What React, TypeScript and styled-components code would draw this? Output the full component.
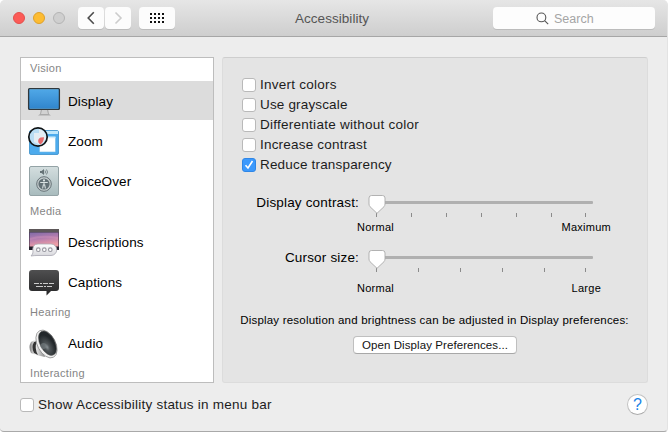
import React from "react";
import styled, { createGlobalStyle } from "styled-components";

const GlobalStyle = createGlobalStyle`
  * { box-sizing: border-box; }
  body { margin: 0; background: #fff; font-family: "Liberation Sans", Arial, sans-serif; }
  button, input { font-family: inherit; }
`;

const Window = styled.main`
  width: 668px;
  height: 432px;
  overflow: hidden;
  background: #ededed;
  border-right: 1px solid #e3e3e3;
  border-bottom: 1px solid #a9a9a9;
  border-radius: 5px 5px 4px 4px;
  color: #1c1c1c;
`;

const Toolbar = styled.header`
  display: flex;
  height: 37px;
  padding: 7px 12px 0 13px;
  background: linear-gradient(#e6e6e6, #cecece);
  border-bottom: 1px solid #a6a6a6;
`;

const Lights = styled.div`
  display: flex;
  gap: 8px;
  width: 65px;
  padding-top: 5px;
`;

const Light = styled.span<{ $fill: string; $edge: string }>`
  width: 12px;
  height: 12px;
  border-radius: 50%;
  background: ${(p) => p.$fill};
  border: 1px solid ${(p) => p.$edge};
`;

const ToolButton = styled.button<{ $width: number; $gap?: number }>`
  display: flex;
  align-items: center;
  justify-content: center;
  width: ${(p) => p.$width}px;
  height: 22px;
  margin: 0 ${(p) => p.$gap ?? 0}px 0 0;
  padding: 0;
  border: 0;
  border-radius: 4px;
  background: #fcfcfc;
  box-shadow: 0 1px 0 #bcbcbc;
`;

const Title = styled.h1`
  width: 318px;
  margin: 0;
  padding-left: 120px;
  font-size: 13.5px;
  font-weight: 400;
  line-height: 23px;
  letter-spacing: 0.04px;
  color: #555;
`;

const Search = styled.div`
  display: flex;
  width: 162px;
  height: 22px;
  padding-left: 43px;
  gap: 5px;
  border-radius: 4px;
  background: #fdfdfd;
  box-shadow: 0 1px 0 #bcbcbc;
  color: #a5a5a5;
  font-size: 12.5px;
  line-height: 24px;

  svg { margin-top: 5px; }
`;

const Body = styled.div`
  display: flex;
  gap: 8px;
  padding: 20px 19px 0 20px;
`;

const Sidebar = styled.nav`
  flex: none;
  width: 194px;
  height: 326px;
  overflow: hidden;
  border: 1px solid #bdbdbd;
  background: #fff;
`;

const Category = styled.div<{ $first?: boolean }>`
  height: ${(p) => (p.$first ? 23 : 21)}px;
  padding-left: 9px;
  font-size: 11px;
  line-height: 21px;
  letter-spacing: 0.32px;
  color: #858585;
`;

const Item = styled.div<{ $selected?: boolean }>`
  display: flex;
  align-items: center;
  height: 39px;
  margin-bottom: 1px;
  padding-left: 6px;
  gap: 7px;
  font-size: 13.5px;
  letter-spacing: 0.12px;
  color: #000;
  background: ${(p) => (p.$selected ? "#dcdcdc" : "#fff")};

  svg { flex: none; }
`;

const ItemName = styled.span`
  padding-top: 2px;
`;

const Panel = styled.section`
  flex: none;
  width: 426px;
  height: 326px;
  padding-top: 17px;
  border: 1px solid #dcdcdc;
  border-top-color: #cecece;
  border-radius: 3px;
  background: #e4e4e4;
`;

const Options = styled.div`
  padding-left: 19px;
`;

const Option = styled.label<{ $spacing: number }>`
  display: flex;
  align-items: center;
  gap: 4px;
  height: 20px;
  font-size: 13.5px;
  line-height: 20px;
  letter-spacing: ${(p) => p.$spacing}px;
  white-space: nowrap;
`;

const Box = styled.span<{ $on?: boolean }>`
  display: flex;
  align-items: center;
  justify-content: center;
  flex: none;
  width: 14px;
  height: 14px;
  border: 1px solid ${(p) => (p.$on ? "#2f86e6" : "#b9b9b9")};
  border-radius: 3px;
  background: ${(p) => (p.$on ? "#3c99fc" : "#fff")};
`;

const Setting = styled.div<{ $top: number }>`
  display: grid;
  grid-template-columns: 136px 1fr;
  column-gap: 9px;
  margin-top: ${(p) => p.$top}px;
`;

const SettingName = styled.span`
  justify-self: end;
  font-size: 13.5px;
  line-height: 15px;
  letter-spacing: 0.17px;
  white-space: nowrap;
  color: #000;
`;

const Ends = styled.div<{ $top: number; $right: number }>`
  grid-column: 2;
  display: flex;
  justify-content: space-between;
  margin: ${(p) => p.$top}px ${(p) => p.$right}px 0 -11px;
  font-size: 11px;
  line-height: 14px;
  letter-spacing: 0.25px;
  color: #000;
`;

const Hint = styled.p`
  margin: 18px 0 0;
  text-align: center;
  font-size: 11.5px;
  line-height: 14px;
  letter-spacing: 0.2px;
  padding-right: 1px;
  white-space: nowrap;
  color: #000;
`;

const PushButton = styled.button`
  display: block;
  width: 164px;
  height: 18px;
  margin: 9px 0 0 130px;
  padding: 0;
  border: 1px solid #bfbfbf;
  border-bottom-color: #a8a8a8;
  border-radius: 4px;
  background: #fff;
  font-size: 11.5px;
  line-height: 15px;
  letter-spacing: 0.08px;
  color: #111;
`;

const Footer = styled.footer`
  display: flex;
  justify-content: space-between;
  padding: 12px 19px 0 20px;
`;

const Help = styled.button`
  width: 21px;
  height: 21px;
  margin-top: -1px;
  padding: 0;
  border: 1px solid #c2c2c2;
  border-bottom-color: #aaa;
  border-radius: 50%;
  background: #fff;
  font-size: 16px;
  line-height: 19px;
  color: #1883e8;
`;

const DisplayIcon = () => (
  <svg width="34" height="34" viewBox="0 0 34 34">
    <defs>
      <linearGradient id="screen" x2="0" y2="1"><stop stopColor="#51a9e8" /><stop offset="1" stopColor="#2f84cc" /></linearGradient>
    </defs>
    <path d="M14 25h7l1 5 2 1.5H11L13 30z" fill="#aaa" />
    <path d="M15 26h5l1 4h-7z" fill="#d2d2d2" />
    <rect x="1.6" y="4.6" width="30.8" height="20.8" rx="1" fill="url(#screen)" stroke="#30383c" strokeWidth="1.3" />
    <path d="M3 5.5h28M3 24.5h28" stroke="#6db3df" strokeWidth=".4" />
  </svg>
);

const ZoomIcon = () => (
  <svg width="34" height="34" viewBox="0 0 34 34">
    <rect x="2.5" y="6.5" width="29" height="24" rx="1.5" fill="#4dabed" stroke="#398ec9" strokeWidth=".8" />
    <path d="M3 7h28v3H3z" fill="#bfe7fb" />
    <path d="M12.5 13h16v15h-16z" fill="#fff" stroke="#70b8e6" strokeWidth=".6" />
    <path d="M12.5 12.5h16v1.7h-16z" fill="#d2edfa" />
    <circle cx="11" cy="13" r="9.2" fill="#b9ddf4" />
    <path d="M7 9h5v-4a9 9 0 0 1 7 10l-5 6-7-3z" fill="#e3edf4" />
    <path d="M17 13.3a9 9 0 0 1-3.5 7.2c-3-1.2-3.2-5.5 0-6.9z" fill="#e56b6d" />
    <circle cx="11" cy="13" r="9.2" fill="none" stroke="#101416" strokeWidth="1.7" />
  </svg>
);

const VoiceOverIcon = () => (
  <svg width="34" height="34" viewBox="0 0 34 34">
    <defs>
      <linearGradient id="plate" x2="0" y2="1"><stop stopColor="#d4dedf" /><stop offset="1" stopColor="#a8bbbd" /></linearGradient>
    </defs>
    <rect x="2.5" y="2.5" width="29" height="29" rx="1.5" fill="url(#plate)" stroke="#94a3a6" />
    <path d="M13 7h1.5L17 5v6l-2.5-2H13z" fill="#657276" />
    <path d="M18 6.5q1 1.5 0 3M19.5 5.5q2 2.5 0 5" fill="none" stroke="#657276" strokeWidth=".8" />
    <circle cx="17" cy="20" r="7.3" fill="#c5cecf" stroke="#667277" strokeWidth="1" />
    <circle cx="17" cy="20" r="5.6" fill="#627075" />
    <circle cx="17" cy="16.4" r="1.1" fill="#d9e2e2" />
    <path d="M13.2 18.5h7.6M17 18.5v3M16.4 20.5l-.8 4M17.6 20.5l.8 4" fill="none" stroke="#d9e2e2" strokeWidth="1.1" />
  </svg>
);

const DescriptionsIcon = () => (
  <svg width="34" height="34" viewBox="0 0 34 34">
    <defs>
      <linearGradient id="sky" x2=".3" y2="1"><stop stopColor="#806ba7" /><stop offset=".5" stopColor="#b47daf" /><stop offset="1" stopColor="#ed9ca5" /></linearGradient>
      <linearGradient id="bubble" x2="0" y2="1"><stop stopColor="#fff" /><stop offset="1" stopColor="#d7d7dc" /></linearGradient>
    </defs>
    <path d="M2 4h30v21H2z" fill="#25212e" />
    <path d="M2 4h30v3.5H2z" fill="#5d5759" />
    <path d="M2.5 7.5h29v14h-29z" fill="url(#sky)" />
    <path d="M3 14q12-4 28-1" fill="none" stroke="#e8a5c2" opacity=".25" strokeWidth="2" />
    <path d="M11 19h13a5.5 5.5 0 0 1 0 11.5H10q-2.5 0-6 .5 2-2 2-4Q4.8 19 11 19z" fill="url(#bubble)" stroke="#aaa8b3" strokeWidth=".8" />
    <g fill="#fff" stroke="#96969f" strokeWidth="1.1"><circle cx="11.3" cy="24.7" r="1.8" /><circle cx="17.3" cy="24.7" r="1.8" /><circle cx="23.3" cy="24.7" r="1.8" /></g>
  </svg>
);

const CaptionsIcon = () => (
  <svg width="34" height="34" viewBox="0 0 34 34">
    <defs><linearGradient id="caption" x2="0" y2="1"><stop stopColor="#4f4f50" /><stop offset="1" stopColor="#262627" /></linearGradient></defs>
    <path d="M5 5h24q3 0 3 3v15q0 3-3 3h-5l-4.5 4.5V26H5q-3 0-3-3V8q0-3 3-3z" fill="url(#caption)" />
    <path d="M7 18.5h5m1 0h2m1 0h5m1 0h5M9 21.5h7m1 0h2m1 0h5" fill="none" stroke="#ddd" strokeWidth=".9" />
  </svg>
);

const AudioIcon = () => (
  <svg width="34" height="34" viewBox="0 0 34 34">
    <defs>
      <linearGradient id="metal"><stop stopColor="#777" /><stop offset=".35" stopColor="#f4f4f4" /><stop offset="1" stopColor="#8b8b8b" /></linearGradient>
      <radialGradient id="cone" cx=".35" cy=".62"><stop stopColor="#8b9296" /><stop offset=".3" stopColor="#51575a" /><stop offset="1" stopColor="#22272a" /></radialGradient>
    </defs>
    <path d="M12 12L4 16q-3 5 0 11l5 2 9 2z" fill="url(#metal)" />
    <path d="M7 16q-3 5 0 11l4 2q-4-7-1-14z" fill="#333" />
    <ellipse cx="19.5" cy="18" rx="9" ry="15" transform="rotate(-28 19.5 18)" fill="#f0f0f0" stroke="#888" strokeWidth=".7" />
    <ellipse cx="20.5" cy="17.2" rx="7.4" ry="13.2" transform="rotate(-28 20.5 17.2)" fill="url(#cone)" stroke="#555" strokeWidth=".5" />
    <circle cx="16.5" cy="20" r="3" fill="#777e81" opacity=".65" />
  </svg>
);

const Chevron = ({ forward }: { forward?: boolean }) => (
  <svg width="10" height="14" viewBox="0 0 10 14">
    <path d={forward ? "M2.5 1.5L8 7l-5.5 5.5" : "M7.8 1.3L2.2 7l5.6 5.7"} fill="none" stroke={forward ? "#ccc" : "#4b4b4b"} strokeWidth="1.6" />
  </svg>
);

const Slider = ({ ticks }: { ticks: number[] }) => (
  <svg width="230" height="24" viewBox="0 0 230 24">
    <rect x="9" y="6" width="216" height="3" rx="1" fill="#b0b0b0" />
    {ticks.map((x) => <rect key={x} x={x} y="18" width="1" height="4" fill="#8b8b8b" />)}
    <path d="M3.5.5h11Q17 .5 17 3v6q0 1.5-1 2.7L9 18.3 2 11.7Q1 10.5 1 9V3Q1 .5 3.5.5z" fill="#fff" stroke="#aaa" strokeWidth=".9" />
  </svg>
);

const choices = [
  { text: "Invert colors", spacing: 0.24 },
  { text: "Use grayscale", spacing: 0.16 },
  { text: "Differentiate without color", spacing: 0.26 },
  { text: "Increase contrast", spacing: 0.2 },
  { text: "Reduce transparency", spacing: 0.18, on: true },
];

export default function App() {
  return (
    <>
      <GlobalStyle />
      <Window>
        <Toolbar>
          <Lights>
            <Light $fill="#fc5b57" $edge="#e2504d" />
            <Light $fill="#fdbc32" $edge="#dda02b" />
            <Light $fill="#cfcfcf" $edge="#b4b4b4" />
          </Lights>
          <ToolButton $width={26} $gap={1}><Chevron /></ToolButton>
          <ToolButton $width={26} $gap={8}><Chevron forward /></ToolButton>
          <ToolButton $width={36}>
            <svg width="16" height="12" viewBox="0 0 16 12" fill="#111">
              {[1, 5, 9].map((y) => [1, 5, 9, 13].map((x) => <rect key={`${x}-${y}`} x={x} y={y} width="2" height="2" />))}
            </svg>
          </ToolButton>
          <Title>Accessibility</Title>
          <Search>
            <svg width="13" height="13" viewBox="0 0 13 13" fill="none" stroke="#555" strokeWidth="1.1"><circle cx="5.4" cy="5.4" r="4.4" /><path d="M8.6 8.6l3.6 3.6" /></svg>
            Search
          </Search>
        </Toolbar>
        <Body>
          <Sidebar>
            <Category $first>Vision</Category>
            <Item $selected><DisplayIcon /><ItemName>Display</ItemName></Item>
            <Item><ZoomIcon /><ItemName>Zoom</ItemName></Item>
            <Item><VoiceOverIcon /><ItemName>VoiceOver</ItemName></Item>
            <Category>Media</Category>
            <Item><DescriptionsIcon /><ItemName>Descriptions</ItemName></Item>
            <Item><CaptionsIcon /><ItemName>Captions</ItemName></Item>
            <Category>Hearing</Category>
            <Item><AudioIcon /><ItemName>Audio</ItemName></Item>
            <Category>Interacting</Category>
          </Sidebar>
          <Panel>
            <Options>
              {choices.map((c) => (
                <Option key={c.text} $spacing={c.spacing}>
                  <Box $on={c.on}>
                    {c.on && <svg width="10" height="10" viewBox="0 0 10 10"><path d="M1.5 5.2L4 8l4.5-7" fill="none" stroke="#fff" strokeWidth="1.6" /></svg>}
                  </Box>
                  {c.text}
                </Option>
              ))}
            </Options>
            <Setting $top={20}>
              <SettingName>Display contrast:</SettingName>
              <Slider ticks={[8, 43, 78, 113, 148, 183, 217]} />
              <Ends $top={1} $right={36}><span>Normal</span><span>Maximum</span></Ends>
            </Setting>
            <Setting $top={16}>
              <SettingName>Cursor size:</SettingName>
              <Slider ticks={[8, 50, 92, 134, 176, 217]} />
              <Ends $top={7} $right={46}><span>Normal</span><span>Large</span></Ends>
            </Setting>
            <Hint>Display resolution and brightness can be adjusted in Display preferences:</Hint>
            <PushButton>Open Display Preferences...</PushButton>
          </Panel>
        </Body>
        <Footer>
          <Option $spacing={0.23}><Box />Show Accessibility status in menu bar</Option>
          <Help>?</Help>
        </Footer>
      </Window>
    </>
  );
}
